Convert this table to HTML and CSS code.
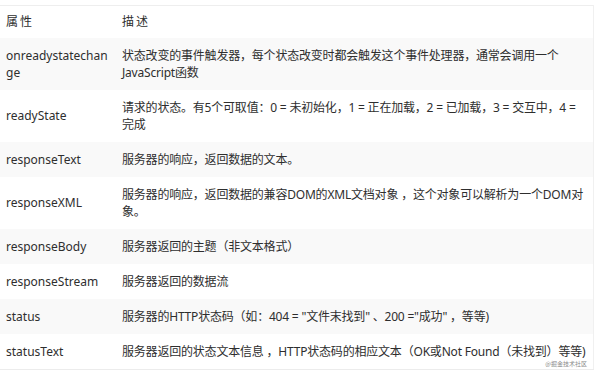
FILE: index.html
```html
<!DOCTYPE html>
<html lang="zh-CN">
<head>
<meta charset="utf-8">
<title>XMLHttpRequest 属性</title>
<link rel="stylesheet" href="styles.css">
</head>
<body>
<div class="wrap">
  <table class="props">
    <colgroup><col class="c-name"><col class="c-desc"></colgroup>
    <thead>
      <tr class="head"><th>属性</th><th>描述</th></tr>
    </thead>
    <tbody>
      <tr class="alt two"><td>onreadystatechange</td><td>状态改变的事件触发器，每个状态改变时都会触发这个事件处理器，通常会调用一个JavaScript函数</td></tr>
      <tr class="two"><td>readyState</td><td>请求的状态。有5个可取值：0 = 未初始化，1 = 正在加载，2 = 已加载，3 = 交互中，4 = <span class="nw">完成</span></td></tr>
      <tr class="alt"><td>responseText</td><td>服务器的响应，返回数据的文本。</td></tr>
      <tr class="two"><td>responseXML</td><td>服务器的响应，返回数据的兼容DOM的XML文档对象 ，这个对象可以解析为一个DOM对象。</td></tr>
      <tr class="alt"><td>responseBody</td><td>服务器返回的主题（非文本格式）</td></tr>
      <tr><td>responseStream</td><td>服务器返回的数据流</td></tr>
      <tr class="alt"><td>status</td><td>服务器的HTTP状态码（如：404 = "文件末找到" 、200 ="成功" ，等等)</td></tr>
      <tr><td>statusText</td><td>服务器返回的状态文本信息 ，HTTP状态码的相应文本（OK或Not Found（未找到）等等)</td></tr>
    </tbody>
  </table>
  <span class="mark">@掘金技术社区</span>
</div>
</body>
</html>
```
FILE: styles.css
```css
html, body {
  margin: 0;
  padding: 0;
  background: #ffffff;
}
.wrap {
  position: relative;
  padding-top: 5px;
  width: 594px;
}
.props {
  width: 594px;
  border-collapse: collapse;
  table-layout: fixed;
  font-family: "Noto Sans", "Noto Sans CJK SC", sans-serif;
  font-size: 12px;
  line-height: 17px;
  color: #2e2e2e;
  border-top: 1px solid #eeeeee;
  border-right: 1px solid #f0f0f0;
  border-bottom: 1px solid #ececec;
}
.c-name { width: 116px; }
.props th,
.props td {
  text-align: left;
  font-weight: normal;
  vertical-align: middle;
  padding: 0 6px;
}
.props td:first-child {
  word-break: break-all;
}
.props td + td {
  padding-right: 1px;
  letter-spacing: -0.2px;
}
.nw { white-space: nowrap; }
.head th {
  height: 30px;
  padding-bottom: 2px;
  letter-spacing: 2px;
}
.props tbody tr { height: 35px; }
.props tbody tr.two { height: 52px; }
.props tbody tr.two td { padding-top: 1px; padding-bottom: 2px; }
.props tbody tr.alt { background: #f9f9f9; }
.mark {
  position: absolute;
  right: 7px;
  bottom: 3px;
  font-family: "Noto Sans CJK SC", sans-serif;
  font-size: 6px;
  line-height: 7px;
  color: #8a8a8a;
}
```
